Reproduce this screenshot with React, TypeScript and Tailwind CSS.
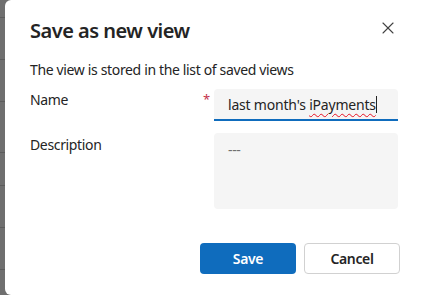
import { X } from "lucide-react";

const stripLines = [18, 42, 42, 51, 33, 42, 42];

const App = () => {
  return (
    <main
      className="w-[425px] h-[295px] flex bg-[#6f6f6f] overflow-hidden"
      style={{ fontFamily: '"Noto Sans", "Open Sans", sans-serif' }}
    >
      {/* backdrop strip */}
      <div className="w-[5px] flex flex-col">
        {stripLines.map((h, i) => (
          <div key={i} className="border-b border-[#5c5c5c]" style={{ height: h }} />
        ))}
      </div>

      <section className="flex-1 bg-white rounded-tl-[6px] rounded-bl-[6px] pl-[25px] pr-[27px] pt-[17px] flex flex-col text-[#242424] tracking-[-0.35px]">
        {/* Header */}
        <div className="flex items-start justify-between">
          <h1 className="text-[20px] leading-[28px] font-semibold tracking-[-0.5px]">Save as new view</h1>
          <button className="w-5 h-5 mt-[1px] flex items-center justify-center text-[#424242]">
            <X className="size-5" strokeWidth={1.3} />
          </button>
        </div>

        <p className="mt-[15px] text-[14px] leading-[20px]">The view is stored in the list of saved views</p>

        {/* Name */}
        <div className="mt-[9px] flex">
          <label className="flex-1 text-[14px] leading-[20px] pt-[1px]">Name</label>
          <span className="w-[11px] text-[#c4314b] text-[13px] leading-[20px]">*</span>
          <div className="w-[184px] h-[32px] bg-[#f5f5f5] rounded-t-[4px] border-b-2 border-[#0f6cbd] pl-[14px] flex items-center text-[14px] tracking-[-0.2px]">
            <span className="whitespace-pre">last month's </span>
            <span className="underline decoration-wavy decoration-[#e81123] underline-offset-[3px] decoration-1">iPayments</span>
            <span className="w-px h-[17px] bg-[#242424]" />
          </div>
        </div>

        {/* Description */}
        <div className="mt-[12px] flex">
          <label className="flex-1 text-[14px] leading-[20px] pt-[2px]">Description</label>
          <div className="w-[184px] h-[76px] bg-[#f5f5f5] rounded-[4px] pl-[14px] pt-[6px] text-[14px] text-[#707070]">
            ---
          </div>
        </div>

        {/* Footer */}
        <div className="mt-[34px] flex justify-end gap-[8px] -mr-[2px]">
          <button className="w-[96px] h-[31px] rounded-[4px] bg-[#0f6cbd] text-white text-[14px] font-semibold">
            Save
          </button>
          <button className="w-[96px] h-[31px] rounded-[4px] bg-white border border-[#d1d1d1] text-[#242424] text-[14px] font-semibold">
            Cancel
          </button>
        </div>
      </section>
    </main>
  );
};

export default App;
